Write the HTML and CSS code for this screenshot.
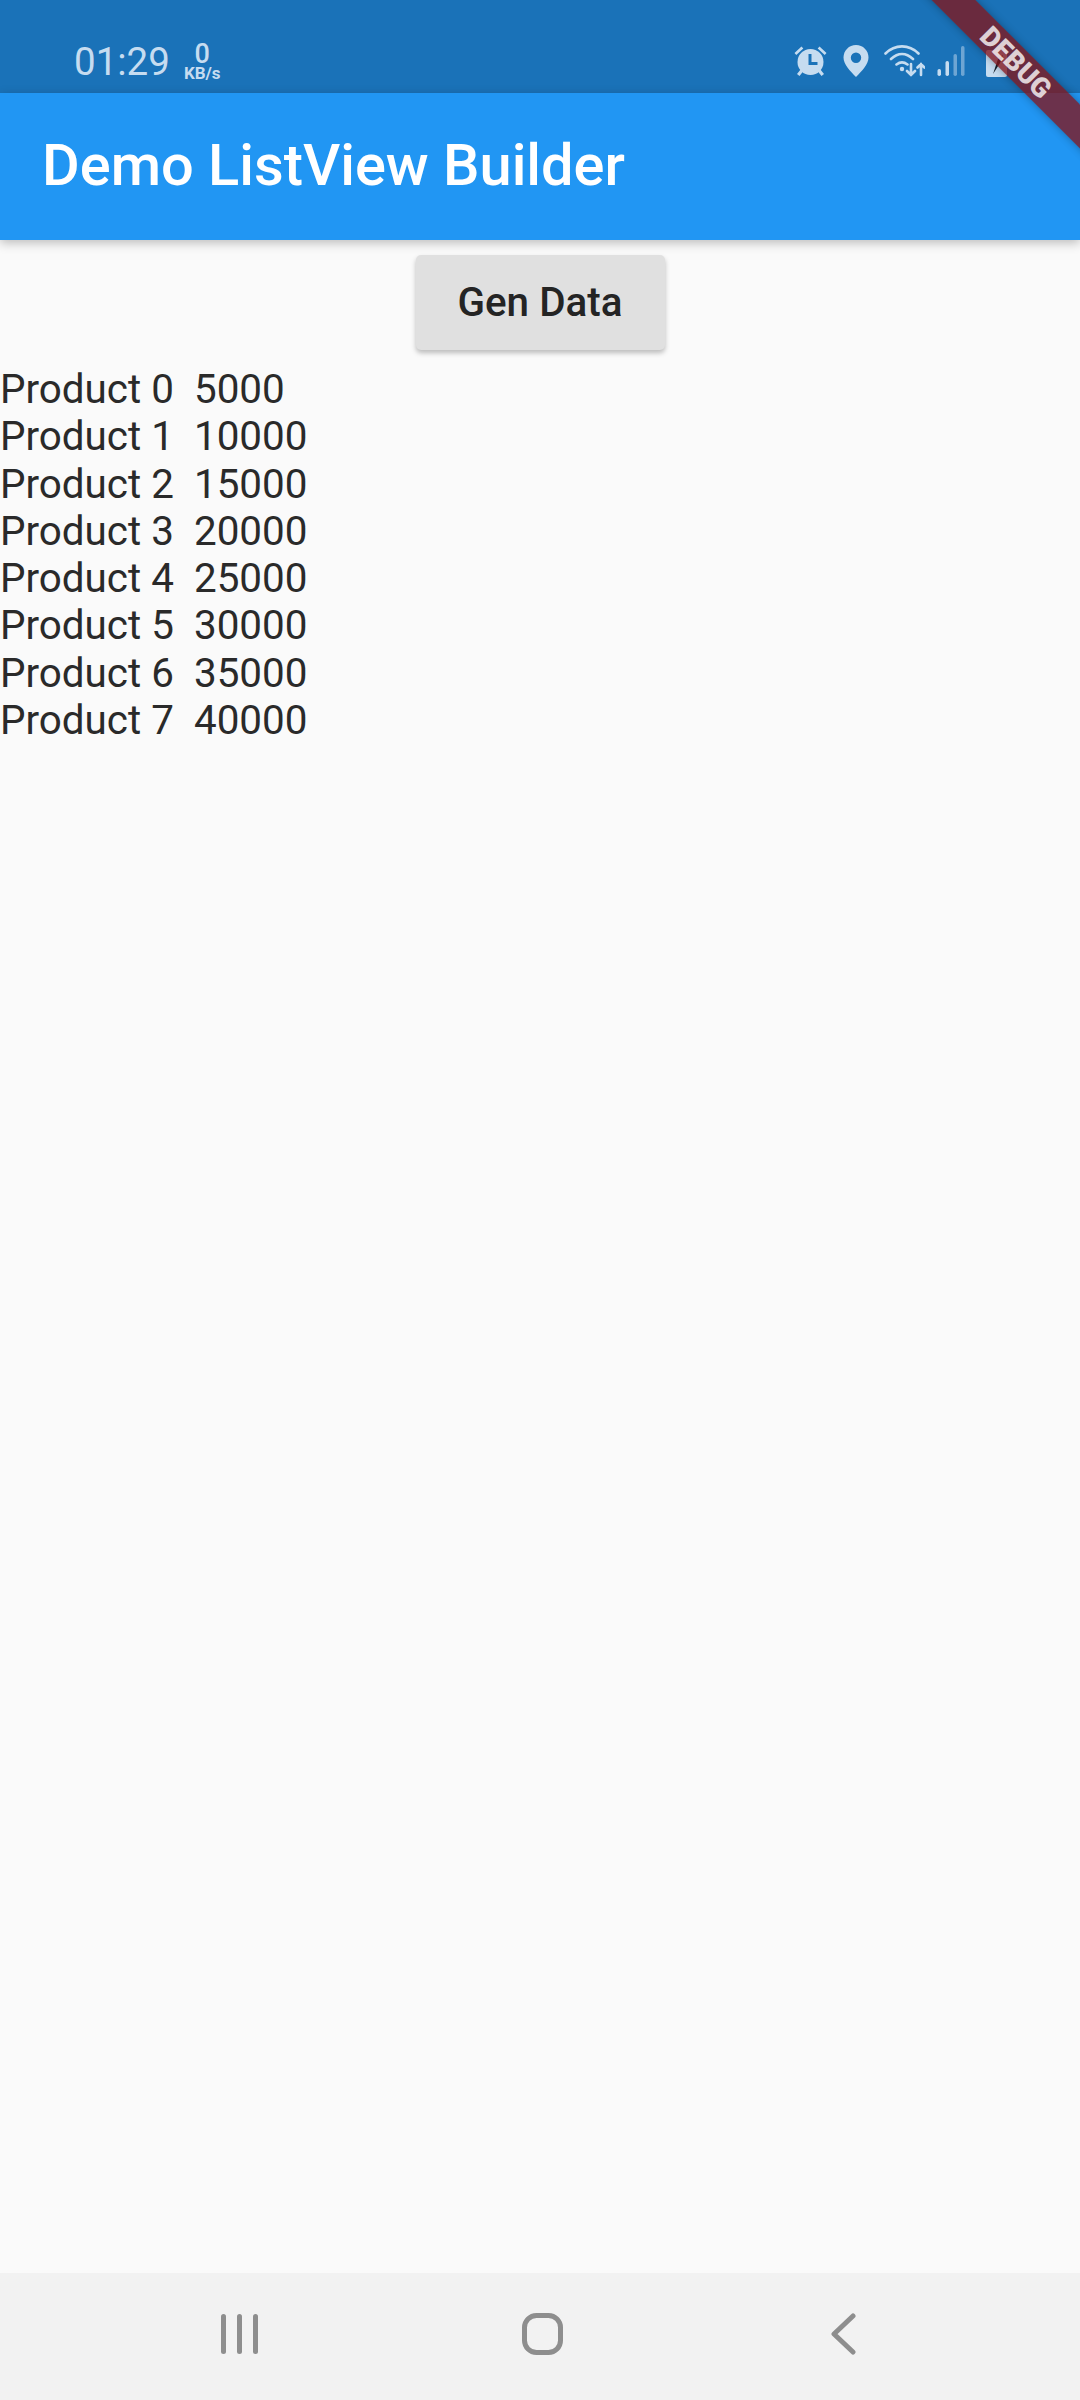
FILE: index.html
```html
<!DOCTYPE html>
<html lang="en">

<head>
    <meta charset="UTF-8">
    <meta name="viewport" content="width=device-width, initial-scale=1.0">
    <title>Demo ListView Builder</title>
    <link rel="stylesheet" href="styles.css">
</head>

<body>
    <div class="screen">
        <div class="status-bar">
            <div class="status-left">
                <span class="clock">01:29</span>
                <span class="speed"><b>0</b><i>KB/s</i></span>
            </div>
            <div class="status-icons">
                <svg class="icon-alarm" width="33" height="32" viewBox="0 0 33 32" fill="#c6dcf0">
                    <circle cx="16.500" cy="17" r="13"/>
                    <path d="M0.500 8l7-6.500 1.800 2-7 6.500zM32.500 8l-7-6.500-1.800 2 7 6.500zM3 29l4-5 2.500 2-4 5zM30 29l-4-5-2.500 2 4 5z"/>
                    <path d="M14.500 9h3v8h6v3h-9z" fill="#1a72b8"/>
                </svg>
                <svg class="icon-pin" width="26" height="32" viewBox="0 0 26 32" fill="#c6dcf0">
                    <path fill-rule="evenodd" d="M13 0C6 0 0.500 5.500 0.500 12.500 0.500 19 7 26 13 32 19 26 25.500 19 25.500 12.500 25.500 5.500 20 0 13 0zm0 7.500a5.200 5.200 0 1 1 0 10.400 5.200 5.200 0 0 1 0-10.400z"/>
                </svg>
                <svg class="icon-wifi" width="41" height="32" viewBox="0 0 41 32" fill="none" stroke="#c6dcf0" stroke-width="2.600" stroke-linecap="round">
                    <path d="M1.500 8.500C11-1 25-1 34.500 8.500M7 14c7-6.500 15-6.500 22 0M12.500 19.500c4-3 7-3 11 0"/>
                    <circle cx="18" cy="24" r="2.200" fill="#c6dcf0" stroke="none"/>
                    <path d="M27 19v11M23 26l4 4 4-4M37 30V19M33.500 22.500l3.500-3.500 3.500 3.500"/>
                </svg>
                <svg class="icon-signal" width="28" height="30" viewBox="0 0 28 30">
                    <rect x="0.500" y="23" width="3.500" height="7" rx="1.700" fill="#c6dcf0"/>
                    <rect x="8.500" y="15" width="3.500" height="15" rx="1.700" fill="#c6dcf0"/>
                    <rect x="16.500" y="8" width="3.500" height="22" rx="1.700" fill="#6ea5d3"/>
                    <rect x="24" y="0" width="3.500" height="30" rx="1.700" fill="#6ea5d3"/>
                </svg>
                <svg class="icon-battery" width="21" height="27" viewBox="0 0 21 27">
                    <rect width="21" height="27" rx="2" fill="#c6dcf0"/>
                    <path d="M7 24l5-15 5-4-3 8z" fill="#16202c"/>
                </svg>
            </div>
        </div>
        <header class="app-bar">
            <h1>Demo ListView Builder</h1>
        </header>
        <main class="content">
            <button class="gen-btn" type="button">Gen Data</button>
            <ul class="product-list">
                <li>Product 0  5000</li>
                <li>Product 1  10000</li>
                <li>Product 2  15000</li>
                <li>Product 3  20000</li>
                <li>Product 4  25000</li>
                <li>Product 5  30000</li>
                <li>Product 6  35000</li>
                <li>Product 7  40000</li>
            </ul>
        </main>
        <nav class="nav-bar">
            <svg width="38" height="42" viewBox="0 0 38 42" fill="#8e8e8e">
                <rect x="0" y="1" width="5" height="40" rx="2.500"/>
                <rect x="16" y="1" width="5" height="40" rx="2.500"/>
                <rect x="32" y="1" width="5" height="40" rx="2.500"/>
            </svg>
            <svg class="nav-home" width="41" height="42" viewBox="0 0 41 42" fill="none" stroke="#8e8e8e" stroke-width="5">
                <rect x="2.500" y="2.500" width="36" height="37" rx="12"/>
            </svg>
            <svg width="25" height="42" viewBox="0 0 25 42" fill="none" stroke="#8e8e8e" stroke-width="5" stroke-linecap="round" stroke-linejoin="round">
                <path d="M22 3L3 21l19 18"/>
            </svg>
        </nav>
        <div class="debug-banner">DEBUG</div>
    </div>
</body>

</html>
```

FILE: styles.css
```css
* {
    box-sizing: border-box;
}

body {
    margin: 0;
    font-family: Roboto, sans-serif;
    background-color: #fafafa;
}

.screen {
    position: relative;
    width: 1080px;
    height: 2400px;
    overflow: hidden;
    display: flex;
    flex-direction: column;
}

.status-bar {
    height: 93px;
    background-color: #1a72b8;
    color: #c6dcf0;
    display: flex;
    justify-content: space-between;
    padding: 0 73px 0 74px;
}

.status-left {
    display: flex;
    align-items: flex-start;
    gap: 14px;
    padding-top: 40px;
}

.clock {
    font-size: 38.500px;
    line-height: 44px;
}

.speed {
    display: flex;
    flex-direction: column;
    align-items: center;
    margin-top: 3px;
}

.speed b {
    font-size: 27px;
    line-height: 23px;
    font-weight: 500;
}

.speed i {
    font-size: 17px;
    line-height: 15px;
    font-weight: 700;
    font-style: normal;
}

.status-icons {
    display: flex;
    align-items: flex-start;
    padding-top: 45px;
}

.icon-pin {
    margin-left: 16px;
}

.icon-wifi {
    margin-left: 15px;
}

.icon-signal {
    margin-left: 12px;
    margin-top: 1px;
}

.icon-battery {
    margin-left: 21px;
    margin-top: 5px;
}

.app-bar {
    height: 147px;
    background-color: #2196f3;
    display: flex;
    align-items: center;
    padding: 0 42px 4px;
    box-shadow: 0 3px 10px rgba(0, 0, 0, 0.25);
    position: relative;
}

.app-bar h1 {
    margin: 0;
    color: #fff;
    font-size: 57.750px;
    font-weight: 500;
}

.content {
    flex: 1;
    display: flex;
    flex-direction: column;
    align-items: center;
    padding-top: 15px;
}

.gen-btn {
    width: 249px;
    height: 95px;
    border: none;
    border-radius: 5px;
    background-color: #e0e0e0;
    color: #242424;
    font-family: Roboto, sans-serif;
    font-size: 40.400px;
    font-weight: 500;
    box-shadow: 0 3px 5px rgba(0, 0, 0, 0.25);
}

.product-list {
    list-style: none;
    margin: 16px 0 0;
    padding: 0;
    width: 100%;
    color: #2a2a2a;
    font-size: 40.400px;
    line-height: 47.250px;
}

.product-list li {
    white-space: pre;
}

.nav-bar {
    height: 127px;
    background-color: #f2f2f2;
    display: flex;
    align-items: center;
    padding: 0 224px 5px 221px;
    justify-content: space-between;
}

.nav-home {
    margin-right: 5px;
}

.debug-banner {
    position: absolute;
    left: 866px;
    top: 47px;
    width: 300px;
    height: 31px;
    line-height: 31px;
    text-align: center;
    transform: rotate(45deg);
    background-color: rgba(130, 22, 28, 0.78);
    box-shadow: 0 0 8px rgba(0, 0, 0, 0.3);
    color: rgba(255, 255, 255, 0.8);
    font-size: 27.500px;
    font-weight: 900;
}
```
